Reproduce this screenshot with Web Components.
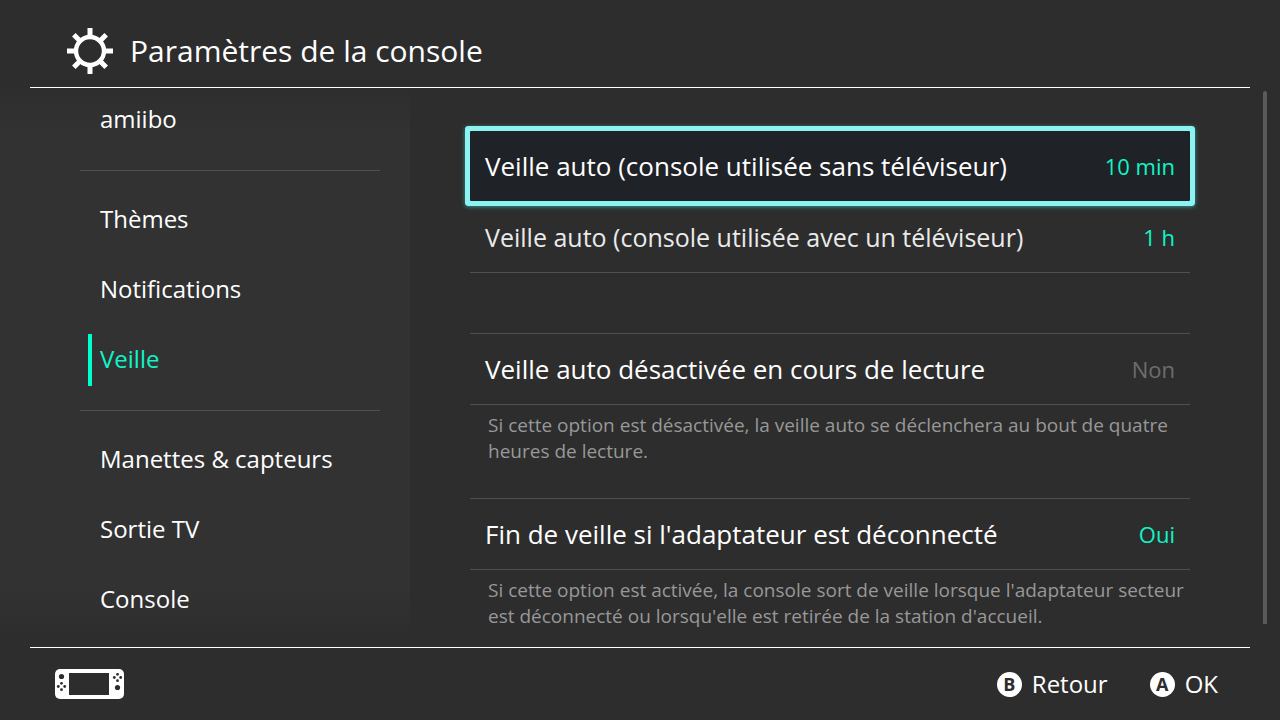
<!DOCTYPE html>
<html lang="fr">
<head>
<meta charset="utf-8">
<meta name="viewport" content="width=device-width, initial-scale=1">
<title>Paramètres de la console</title>
<style>
  :root {
    --bg: #2d2d2d;
    --panel: #323232;
    --text: #ffffff;
    --muted: #989898;
    --off: #6d6d6d;
    --accent: #00ffcc;
    --accent-text: #10f5c6;
    --line: #505050;
    --focus: #8cf3f3;
  }
  html, body { margin: 0; }
  body {
    background: var(--bg);
    color: var(--text);
    font-family: "Open Sans", "Noto Sans", sans-serif;
    font-weight: 400;
  }
</style>
</head>
<body>
<settings-app>
  <settings-header slot="header">Paramètres de la console</settings-header>
  <settings-nav slot="nav">
    <nav-item>amiibo</nav-item>
    <nav-divider></nav-divider>
    <nav-item>Thèmes</nav-item>
    <nav-item>Notifications</nav-item>
    <nav-item current>Veille</nav-item>
    <nav-divider></nav-divider>
    <nav-item>Manettes &amp; capteurs</nav-item>
    <nav-item>Sortie TV</nav-item>
    <nav-item>Console</nav-item>
  </settings-nav>
  <settings-panel slot="panel">
    <setting-group>
      <setting-row value="10 min" focused>Veille auto (console utilisée sans téléviseur)</setting-row>
      <setting-row value="1 h" long>Veille auto (console utilisée avec un téléviseur)</setting-row>
    </setting-group>
    <setting-group lined>
      <setting-row value="Non" off>Veille auto désactivée en cours de lecture</setting-row>
      <span slot="note">Si cette option est désactivée, la veille auto se déclenchera au bout de quatre heures de lecture.</span>
    </setting-group>
    <setting-group lined>
      <setting-row value="Oui">Fin de veille si l'adaptateur est déconnecté</setting-row>
      <span slot="note">Si cette option est activée, la console sort de veille lorsque l'adaptateur secteur est déconnecté ou lorsqu'elle est retirée de la station d'accueil.</span>
    </setting-group>
  </settings-panel>
  <settings-footer slot="footer">
    <pad-button key="B">Retour</pad-button>
    <pad-button key="A">OK</pad-button>
  </settings-footer>
</settings-app>

<script>
const RESET = `button { all: unset; box-sizing: border-box; cursor: pointer; }`;

function define(name, html, setup) {
  const template = document.createElement('template');
  template.innerHTML = html;
  customElements.define(name, class extends HTMLElement {
    constructor() {
      super();
      this.attachShadow({ mode: 'open' }).append(template.content.cloneNode(true));
    }
    connectedCallback() {
      if (setup) setup(this, this.shadowRoot);
    }
  });
}

define('settings-app', `
  <style>
    :host { display: flex; flex-direction: column; min-height: 100vh; }
    .body { flex: 1; display: flex; }
  </style>
  <slot name="header"></slot>
  <div class="body"><slot name="nav"></slot><slot name="panel"></slot></div>
  <slot name="footer"></slot>
`);

define('settings-header', `
  <style>
    :host { display: block; margin: 0 30px; border-bottom: 1px solid var(--text); }
    header { display: flex; align-items: center; gap: 16px; height: 87px; padding: 14px 36px 0; box-sizing: border-box; }
    svg { width: 48px; height: 48px; flex: none; }
    h1 { margin: 0; font-size: 30px; line-height: 40px; font-weight: inherit; }
  </style>
  <header>
    <svg viewBox="0 0 48 48" fill="none" stroke="#fff" aria-hidden="true">
      <circle cx="24" cy="24" r="14" stroke-width="4.4"/>
      <path stroke-width="5" d="M24 1v9M24 38v9M1 24h9M38 24h9M7.8 7.8l6 6M34.2 34.2l6 6M7.8 40.2l6-6M34.2 13.8l6-6"/>
    </svg>
    <h1><slot></slot></h1>
  </header>
`);

define('settings-nav', `
  <style>
    :host {
      display: flex; width: 410px; flex: none; overflow: hidden;
      background: linear-gradient(var(--bg), var(--panel) 40px, var(--panel) calc(100% - 60px), var(--bg) calc(100% - 10px));
    }
    nav { flex: 1; display: flex; flex-direction: column; justify-content: flex-end; padding: 0 30px 12px 80px; height: 547px; }
  </style>
  <nav aria-label="Paramètres"><slot></slot></nav>
`);

define('nav-divider', `
  <style>
    :host { display: block; padding: 15px 0 14px; flex: none; }
    div { height: 1px; background: var(--line); }
  </style>
  <div role="separator"></div>
`);

define('nav-item', `
  <style>
    :host { display: flex; align-items: center; height: 70px; flex: none; }
    a {
      flex: 1; height: 52px; margin-left: 8px; padding-left: 8px; border-left: 4px solid transparent;
      font-size: 24px; line-height: 50px; color: inherit; text-decoration: none;
    }
    :host([current]) a { color: var(--accent-text); border-color: var(--accent); }
  </style>
  <a href="#"><slot></slot></a>
`, (host, root) => {
  if (host.hasAttribute('current')) root.querySelector('a').setAttribute('aria-current', 'page');
});

define('settings-panel', `
  <style>
    :host { display: flex; flex: 1; min-width: 0; }
    main { flex: 1; min-width: 0; padding: 43px 73px 0 60px; }
    .track { width: 4px; margin: 3px 13px 23px 0; border-radius: 2px 2px 0 0; background: #5a5a5a; }
  </style>
  <main><slot></slot></main>
  <div class="track"></div>
`);

define('setting-group', `
  <style>
    :host { display: block; margin-bottom: 60px; }
    :host([lined]) { border-top: 1px solid var(--line); margin: 0; }
    p { margin: 0; padding: 7px 0 34px 18px; font-size: 19px; line-height: 26px; color: var(--muted); }
    :host(:not([lined])) p { display: none; }
    :host(:last-of-type) p { padding-bottom: 0; }
  </style>
  <slot></slot>
  <p><slot name="note"></slot></p>
`);

define('setting-row', `
  <style>
    ${RESET}
    :host { display: block; height: 70px; border-bottom: 1px solid var(--line); }
    button { display: flex; align-items: center; justify-content: space-between; width: 100%; height: 70px; padding: 0 15px; }
    .label { font-size: 26px; line-height: 36px; white-space: nowrap; }
    .value { font-size: 22px; line-height: 30px; color: var(--accent-text); white-space: nowrap; }
    :host([long]) .label { font-size: 25px; color: #eaeaea; }
    :host([off]) .value { color: var(--off); }
    :host([focused]) { border-color: transparent; }
    :host([focused]) button {
      background: #1f2227; border-radius: 1px;
      box-shadow: 0 0 0 5px var(--focus), 0 1px 4px 5px #3a8f92;
    }
  </style>
  <button type="button"><span class="label"><slot></slot></span><span class="value"></span></button>
`, (host, root) => {
  root.querySelector('.value').textContent = host.getAttribute('value');
});

define('settings-footer', `
  <style>
    :host { display: block; margin: 0 30px; border-top: 1px solid var(--text); }
    footer { display: flex; align-items: center; gap: 42px; height: 72px; padding: 0 32px 0 25px; }
    svg { width: 69px; height: 30px; margin-right: auto; flex: none; }
  </style>
  <footer>
    <svg viewBox="0 0 69 30" role="img" aria-label="Console">
      <rect width="69" height="30" rx="5" fill="#fff"/>
      <g fill="#2d2d2d">
        <rect x="14" y="4" width="40" height="22"/>
        <circle cx="6.5" cy="7.5" r="2.6"/><circle cx="62.5" cy="18.5" r="2.6"/>
        <circle cx="6.5" cy="14.3" r="1.4"/><circle cx="6.5" cy="20.7" r="1.4"/><circle cx="3.3" cy="17.5" r="1.4"/><circle cx="9.7" cy="17.5" r="1.4"/>
        <circle cx="62.5" cy="5.3" r="1.4"/><circle cx="62.5" cy="11.7" r="1.4"/><circle cx="59.3" cy="8.5" r="1.4"/><circle cx="65.7" cy="8.5" r="1.4"/>
      </g>
    </svg>
    <slot></slot>
  </footer>
`);

define('pad-button', `
  <style>
    ${RESET}
    :host { display: block; }
    button { display: flex; align-items: center; gap: 10px; font-size: 24px; line-height: 32px; }
    .key {
      width: 25px; border-radius: 50%; background: var(--text); color: var(--bg);
      font-size: 18px; line-height: 25px; font-weight: 700; text-align: center;
    }
  </style>
  <button type="button"><span class="key"></span><span><slot></slot></span></button>
`, (host, root) => {
  root.querySelector('.key').textContent = host.getAttribute('key');
});
</script>
</body>
</html>
